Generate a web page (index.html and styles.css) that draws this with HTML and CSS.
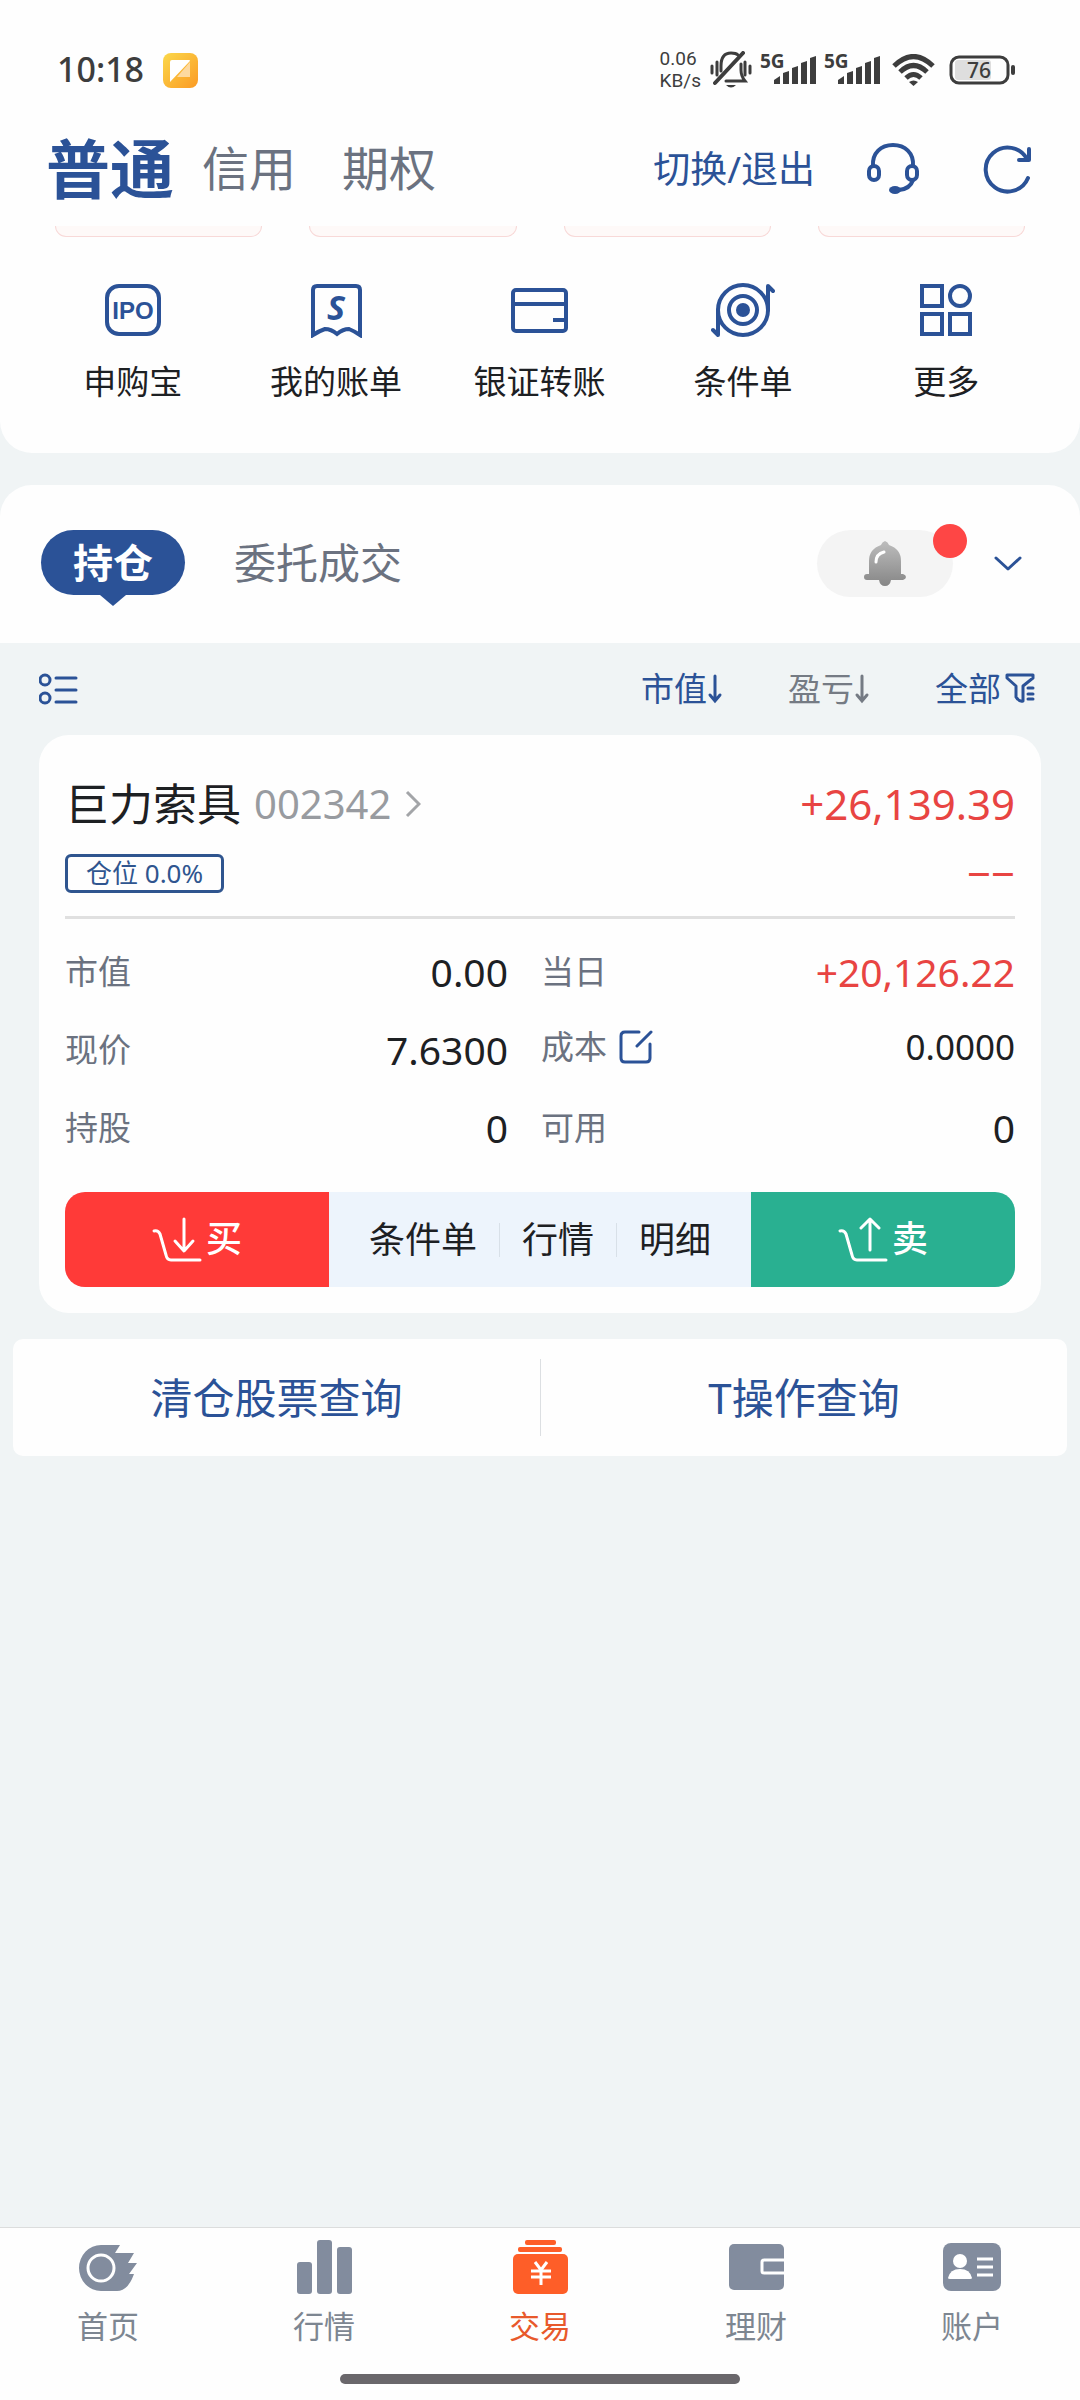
FILE: index.html
```html
<!DOCTYPE html>
<html lang="zh-CN">

<head>
  <meta charset="UTF-8">
  <meta name="viewport" content="width=device-width, initial-scale=1.0">
  <title>交易 - 持仓</title>
  <link rel="stylesheet" href="styles.css">
</head>

<body>
  <div class="top-panel">
    <div class="status-bar">
      <span class="time">10:18</span>
      <svg class="app-icon" width="35" height="35" viewBox="0 0 35 35">
        <defs>
          <linearGradient id="app-bg" x1="0" y1="0" x2="1" y2="1">
            <stop offset="0" stop-color="#fbd84a" />
            <stop offset="1" stop-color="#fb9a24" />
          </linearGradient>
        </defs>
        <rect width="35" height="35" rx="8" fill="url(#app-bg)" />
        <path d="M27 9V24H14Z" fill="#fdd9a0" />
        <path d="M9 7H26Q28 7 26 9L7 29V9Q7 7 9 7Z" fill="#fff" />
      </svg>
      <div class="status-icons">
        <span class="speed">0.06<br>KB/s</span>
        <svg class="mute" width="42" height="38" viewBox="0 0 42 38" fill="none" stroke="#3d3d3d" stroke-width="3" stroke-linecap="round">
          <path d="M2 15v7M7 11v13M35 11v13M40 15v7" />
          <path d="M11 20V15C11 7 14 2 21 2Q26 2 28 4M31 13V19Q31 25 35 30H16" />
          <path d="M33 2L5 32" stroke-width="4" />
          <path d="M16 34h10q-5 5-10 0z" fill="#3d3d3d" stroke="none" />
        </svg>
        <span class="signal">
          <span>5G</span>
          <svg width="42" height="28" viewBox="0 0 42 28" fill="#3d3d3d">
            <path d="M0 28V24L6 20V28ZM9 28V17L15 15V28ZM18 28V12L24 10V28ZM27 28V7L33 5V28ZM36 28V2L42 0V28Z" />
          </svg>
        </span>
        <span class="signal">
          <span>5G</span>
          <svg width="42" height="28" viewBox="0 0 42 28" fill="#3d3d3d">
            <path d="M0 28V24L6 20V28ZM9 28V17L15 15V28ZM18 28V12L24 10V28ZM27 28V7L33 5V28ZM36 28V2L42 0V28Z" />
          </svg>
        </span>
        <svg class="wifi" width="43" height="32" viewBox="0 0 43 32" fill="none" stroke="#3d3d3d" stroke-width="5">
          <path d="M2 12Q21.500-7 41 12M8 18Q21.500 5 35 18M14 24Q21.500 17 29 24" />
          <path d="M17 28q4.500-3 9 0l-4.500 4z" fill="#3d3d3d" stroke="none" />
        </svg>
        <svg class="battery" width="67" height="30" viewBox="0 0 67 30">
          <rect x="6" y="5" width="36" height="20" rx="3" fill="#dedede" />
          <rect x="2" y="2" width="57" height="26" rx="8" fill="none" stroke="#3d3d3d" stroke-width="3" />
          <rect x="62" y="10" width="4" height="10" rx="2" fill="#3d3d3d" />
          <text x="30" y="23" text-anchor="middle" font-size="21" font-weight="500" fill="#3d3d3d">76</text>
        </svg>
      </div>
    </div>

    <header>
      <nav class="account-tabs">
        <a class="active" href="#">普通</a>
        <a href="#">信用</a>
        <a href="#">期权</a>
      </nav>
      <div class="header-actions">
        <a href="#">切换/退出</a>
        <button type="button" aria-label="客服">
          <svg width="52" height="52" viewBox="0 0 52 52" fill="none" stroke="#2b5297" stroke-width="4">
            <path d="M6 23C5 10 14 2 26 2S47 10 46 23" />
            <rect x="2" y="23" width="10" height="14" rx="5" />
            <rect x="40" y="23" width="10" height="14" rx="5" />
            <path d="M46 37Q43 46 32 47" />
            <ellipse cx="28" cy="47" rx="6" ry="4" fill="#2b5297" stroke="none" />
          </svg>
        </button>
        <button type="button" aria-label="刷新">
          <svg width="50" height="50" viewBox="0 0 50 50" fill="none" stroke="#2b5297" stroke-width="4" stroke-linecap="round" stroke-linejoin="round">
            <path d="M45 34A22 22 0 1 1 44 15" />
            <path d="M46 5V16H36" />
          </svg>
        </button>
      </div>
    </header>

    <div class="asset-cards">
      <div></div>
      <div></div>
      <div></div>
      <div></div>
    </div>

    <nav class="shortcuts">
      <a href="#">
        <svg width="58" height="56" viewBox="0 0 58 56" fill="none" stroke="#2b5297" stroke-width="4">
          <rect x="3" y="4" width="52" height="48" rx="12" />
          <text class="ipo" x="29" y="37" text-anchor="middle">IPO</text>
        </svg>
        申购宝
      </a>
      <a href="#">
        <svg width="58" height="56" viewBox="0 0 58 56" fill="none" stroke="#2b5297" stroke-width="4">
          <path d="M6 53V8Q6 4 10 4H49Q53 4 53 8V53Q47 49 42 47Q36 47 30 52Q24 47 18 47Q12 49 6 53Z" />
          <text class="bill" x="29" y="38" text-anchor="middle">S</text>
        </svg>
        我的账单
      </a>
      <a href="#">
        <svg width="58" height="56" viewBox="0 0 58 56" fill="none" stroke="#2b5297" stroke-width="4">
          <rect x="3" y="8" width="53" height="41" rx="3" />
          <path d="M3 22H56M43 38H56" />
        </svg>
        银证转账
      </a>
      <a href="#">
        <svg width="64" height="56" viewBox="0 0 64 56" fill="none" stroke="#2b5297" stroke-width="4" stroke-linecap="round" stroke-linejoin="round">
          <path d="M57 28V4L62 9M7 28V53L2 48" />
          <ellipse cx="32" cy="28" rx="25" ry="25" />
          <circle cx="32" cy="28" r="14" />
          <circle cx="32" cy="28" r="7" fill="#2b5297" stroke="none" />
        </svg>
        条件单
      </a>
      <a href="#">
        <svg width="58" height="56" viewBox="0 0 58 56" fill="none" stroke="#2b5297" stroke-width="4">
          <rect x="5" y="4" width="20" height="20" />
          <ellipse cx="43" cy="14" rx="10" ry="10" />
          <rect x="5" y="32" width="20" height="20" />
          <rect x="33" y="32" width="20" height="20" />
        </svg>
        更多
      </a>
    </nav>
  </div>

  <main>
    <div class="position-header">
      <button type="button" class="tab active">持仓</button>
      <button type="button" class="tab">委托成交</button>
      <button type="button" class="alert" aria-label="提醒">
        <svg width="42" height="45" viewBox="0 0 42 45">
          <defs>
            <linearGradient id="bell" x1="0" y1="0" x2="0" y2="1">
              <stop offset="0" stop-color="#bdbdbd" />
              <stop offset="1" stop-color="#868686" />
            </linearGradient>
          </defs>
          <path d="M21 0Q24 1 25 4Q37 8 37 20V33H39Q42 34 42 36T39 39H27Q26 45 21 45T15 39H3Q0 39 0 36T3 33H5V20Q5 8 17 4Q18 1 21 0Z" fill="url(#bell)" />
          <path d="M12 21Q12 13 20 11" fill="none" stroke="#fff" stroke-width="3" stroke-linecap="round" />
        </svg>
        <span class="dot"></span>
      </button>
      <button type="button" class="expand" aria-label="展开">
        <svg width="28" height="16" viewBox="0 0 28 16" fill="none" stroke="#2b5297" stroke-width="3" stroke-linecap="round" stroke-linejoin="round">
          <path d="M2 2L14 13L26 2" />
        </svg>
      </button>
    </div>

    <div class="filters">
      <button type="button" class="list-mode" aria-label="列表模式">
        <svg width="40" height="32" viewBox="0 0 40 32" fill="none" stroke="#2b5297" stroke-width="3" stroke-linecap="round">
          <circle cx="6" cy="7" r="5" />
          <circle cx="6" cy="25" r="5" />
          <path d="M17 5H37M17 17H37M17 29H37" />
        </svg>
      </button>
      <button type="button">市值<svg width="16" height="32" viewBox="0 0 16 32" fill="none" stroke="currentColor" stroke-width="3" stroke-linecap="round"><path d="M8 3V27M3 22L8 28L13 22" /></svg></button>
      <button type="button" class="muted">盈亏<svg width="16" height="32" viewBox="0 0 16 32" fill="none" stroke="currentColor" stroke-width="3" stroke-linecap="round"><path d="M8 3V27M3 22L8 28L13 22" /></svg></button>
      <button type="button">全部<svg class="funnel" width="30" height="32" viewBox="0 0 30 32" fill="none" stroke="currentColor" stroke-width="3" stroke-linecap="round" stroke-linejoin="round"><path d="M2 2H28V5L18 13V28Q14 29 11 24V13L2 5ZM23 15H28M23 21H28M23 26H28" /></svg></button>
    </div>

    <section class="stock-card">
      <div class="stock-head">
        <a href="#">
          <span class="name">巨力索具</span>
          <span class="code">002342</span>
          <svg width="16" height="28" viewBox="0 0 16 28" fill="none" stroke="#a3a5a8" stroke-width="3"><path d="M2 2L14 14L2 26" /></svg>
        </a>
        <span class="profit">+26,139.39</span>
      </div>
      <div class="stock-sub">
        <span class="tag">仓位 0.0%</span>
        <span class="profit">−−</span>
      </div>

      <dl class="stock-data">
        <div><dt>市值</dt><dd>0.00</dd></div>
        <div><dt>当日</dt><dd class="up">+20,126.22</dd></div>
        <div><dt>现价</dt><dd>7.6300</dd></div>
        <div class="cost">
          <dt>成本
            <svg width="34" height="34" viewBox="0 0 34 34" fill="none" stroke="#2b5297" stroke-width="3" stroke-linecap="round"><path d="M20 2H6Q2 2 2 6V28Q2 32 6 32H27Q31 32 31 28V14M18 16L32 2" /></svg>
          </dt>
          <dd>0.0000</dd>
        </div>
        <div><dt>持股</dt><dd>0</dd></div>
        <div><dt>可用</dt><dd>0</dd></div>
      </dl>

      <div class="stock-actions">
        <button type="button" class="buy">
          <svg width="50" height="46" viewBox="0 0 50 46" fill="none" stroke="#fff" stroke-width="3" stroke-linecap="round" stroke-linejoin="round">
            <path d="M2 14Q6 13 8 17L14 38Q15 43 19 43H48M32 2V33M23 24L32 34L41 24" />
          </svg>
          买
        </button>
        <div class="more-actions">
          <button type="button">条件单</button>
          <button type="button">行情</button>
          <button type="button">明细</button>
        </div>
        <button type="button" class="sell">
          <svg width="50" height="46" viewBox="0 0 50 46" fill="none" stroke="#fff" stroke-width="3" stroke-linecap="round" stroke-linejoin="round">
            <path d="M2 14Q6 13 8 17L14 38Q15 43 19 43H48M32 33V2M23 11L32 2L41 11" />
          </svg>
          卖
        </button>
      </div>
    </section>

    <div class="query-links">
      <a href="#">清仓股票查询</a>
      <a href="#">T操作查询</a>
    </div>
  </main>

  <footer>
    <nav class="bottom-nav">
      <a href="#">
        <svg width="60" height="60" viewBox="0 0 60 60" fill="#828c9e">
          <path d="M23 8H42L37 16H56L50 26H59L51 37H56Q50 54 39 54H23A22 23 0 0 1 23 8Z" />
          <circle cx="23" cy="31" r="13" fill="none" stroke="#fff" stroke-width="3" />
        </svg>
        首页
      </a>
      <a href="#">
        <svg width="60" height="60" viewBox="0 0 60 60" fill="#828c9e">
          <rect x="3" y="25" width="15" height="32" rx="3" />
          <rect x="23" y="3" width="15" height="54" rx="3" />
          <rect x="43" y="10" width="15" height="47" rx="3" />
        </svg>
        行情
      </a>
      <a class="current" href="#">
        <svg width="60" height="60" viewBox="0 0 60 60" fill="#fe5e28">
          <rect x="15" y="3" width="31" height="5" rx="2" />
          <rect x="8" y="10" width="44" height="5" rx="2" />
          <rect x="3" y="17" width="55" height="40" rx="5" />
          <path d="M25 25L31 33L37 25M21 34H41M21 40H41M31 33V48" fill="none" stroke="#fff" stroke-width="3" />
        </svg>
        交易
      </a>
      <a href="#">
        <svg width="60" height="60" viewBox="0 0 60 60" fill="#828c9e">
          <rect x="3" y="7" width="55" height="46" rx="5" />
          <path d="M58 23H38Q36 23 36 25V34Q36 36 38 36H58" fill="none" stroke="#fff" stroke-width="3" />
        </svg>
        理财
      </a>
      <a href="#">
        <svg width="60" height="60" viewBox="0 0 60 60" fill="#828c9e">
          <rect x="1" y="6" width="58" height="48" rx="8" />
          <circle cx="18" cy="24" r="7" fill="#fff" />
          <path d="M6 41Q8 32 18 32T30 41Q30 42 28 42H8Q6 42 6 41Z" fill="#fff" />
          <path d="M35 22H51M35 30H51M35 38H51" stroke="#fff" stroke-width="3" />
        </svg>
        账户
      </a>
    </nav>
    <div class="home-bar"></div>
  </footer>
</body>

</html>
```

FILE: styles.css
```css
* {
  box-sizing: border-box;
}

body {
  margin: 0;
  min-height: 100vh;
  display: flex;
  flex-direction: column;
  background: #f0f4f5;
  color: #1d2023;
  font-family: "Noto Sans", "Noto Sans CJK SC", sans-serif;
  line-height: 1.4;
}

a {
  color: inherit;
  text-decoration: none;
}

button {
  display: flex;
  align-items: center;
  padding: 0;
  border: 0;
  background: none;
  color: inherit;
  font: inherit;
}

svg {
  display: block;
  flex-shrink: 0;
}

.top-panel {
  background: #fefefe;
  border-radius: 0 0 32px 32px;
  padding-bottom: 47px;
}

/* status bar */
.status-bar {
  display: flex;
  align-items: center;
  height: 110px;
  padding: 30px 64px 0 57px;
  color: #3d3d3d;
}

.time {
  font-size: 34px;
  font-weight: 500;
}

.app-icon {
  margin-left: 19px;
}

.status-icons {
  display: flex;
  align-items: center;
  margin-left: auto;
}

.speed {
  font-family: Roboto, sans-serif;
  font-size: 19px;
  line-height: 22px;
}

.mute {
  margin-left: 9px;
}

.signal {
  display: flex;
  position: relative;
  padding-left: 14px;
  margin-left: 8px;

  span {
    position: absolute;
    left: 0;
    top: -5px;
    font-size: 19px;
    font-weight: 700;
    line-height: 20px;
  }
}

.wifi {
  margin-left: 12px;
}

.battery {
  margin-left: 14px;
}

/* header */
header {
  display: flex;
  align-items: center;
  justify-content: space-between;
  height: 116px;
  padding: 2px 47px 0 46px;
}

.account-tabs {
  display: flex;
  align-items: center;
  color: #6b7280;
  font-size: 47px;

  a + a {
    margin-left: 46px;
  }

  .active {
    color: #2b5297;
    font-size: 64px;
    font-weight: 700;
  }

  .active + a {
    margin-left: 28px;
  }
}

.header-actions {
  display: flex;
  align-items: center;
  color: #2b5297;
  font-size: 37px;

  button {
    margin-left: 52px;
  }

  button + button {
    margin-left: 64px;
  }
}

.asset-cards {
  display: grid;
  grid-template-columns: repeat(4, 1fr);
  gap: 47px;
  padding: 0 55px;

  div {
    height: 11px;
    border: 1px solid #f8d9d8;
    border-top: 0;
    border-radius: 0 0 12px 12px;
    background: #fef9f8;
  }
}

.shortcuts {
  display: grid;
  grid-template-columns: repeat(5, 1fr);
  padding: 45px 32px 0 31px;

  a {
    display: flex;
    flex-direction: column;
    align-items: center;
    gap: 20px;
    font-size: 33px;
    line-height: 48px;
  }

  text {
    fill: #2b5297;
    stroke: none;
    font-weight: 700;
  }

  .ipo {
    font-family: "Liberation Sans", sans-serif;
    font-size: 24px;
  }

  .bill {
    font-size: 34px;
    font-style: italic;
  }
}

/* positions */
main {
  flex: 1;
  margin-top: 32px;
}

.position-header {
  display: flex;
  align-items: flex-start;
  padding: 45px 58px 46px 41px;
  border-radius: 32px 32px 0 0;
  background: #fefefe;
}

.tab {
  height: 67px;
  color: #6b7280;
  font-size: 42px;
}

.tab.active {
  position: relative;
  height: 65px;
  padding: 0 32px;
  margin-right: 49px;
  border-radius: 34px;
  background: #2b5297;
  color: white;
  font-size: 40px;
  font-weight: 700;
}

.tab.active::after {
  content: "";
  position: absolute;
  top: 100%;
  left: 50%;
  margin-left: -13px;
  border: 13px solid transparent;
  border-top: 11px solid #2b5297;
  border-bottom: 0;
}

.alert {
  position: relative;
  justify-content: center;
  width: 136px;
  height: 67px;
  margin-left: auto;
  border-radius: 34px;
  background: #f4f4f4;
}

.dot {
  position: absolute;
  top: -6px;
  right: -14px;
  width: 34px;
  height: 34px;
  border-radius: 50%;
  background: #fe4645;
}

.expand {
  height: 67px;
  margin-left: 41px;
}

.filters {
  display: flex;
  align-items: center;
  height: 92px;
  padding: 0 45px 0 39px;
  color: #2b5297;
  font-size: 33px;

  button + button {
    margin-left: 65px;
  }

  .list-mode {
    margin-right: auto;
  }

  .muted {
    color: #757b84;
  }

  .funnel {
    margin-left: 4px;
  }
}

.stock-card {
  margin: 0 39px;
  padding: 40px 26px 26px;
  border-radius: 30px;
  background: #fefefe;
}

.stock-head {
  display: flex;
  justify-content: space-between;
  line-height: 58px;

  a {
    display: flex;
    align-items: center;
  }

  .name {
    font-size: 44px;
  }

  .code {
    margin: 0 14px 0 13px;
    color: #989ba0;
    font-size: 40px;
  }
}

.profit {
  color: #e84442;
  font-size: 42px;
}

.stock-sub {
  display: flex;
  align-items: center;
  justify-content: space-between;
  height: 86px;
  padding-bottom: 2px;
  border-bottom: 3px solid #e0e0e0;
}

.tag {
  padding: 0 18px;
  border: 3px solid #2f558f;
  border-radius: 6px;
  color: #2f558f;
  font-size: 26px;
  line-height: 33px;
}

.stock-data {
  display: grid;
  grid-template-columns: 443px 1fr;
  gap: 30px 33px;
  margin: 0;
  padding: 29px 0 40px;

  div {
    display: flex;
    justify-content: space-between;
    align-items: flex-start;
    line-height: 48px;
  }

  dt {
    display: flex;
    align-items: center;
    gap: 12px;
    color: #6b7280;
    font-size: 33px;
  }

  dd {
    margin: 0;
    font-size: 39px;
  }

  .up {
    color: #e84442;
  }

  .cost {
    line-height: 42px;
  }

  .cost dd {
    font-size: 35px;
  }
}

.stock-actions {
  display: grid;
  grid-template-columns: 5fr 8fr 5fr;
  height: 95px;
  border-radius: 20px;
  overflow: hidden;
  background: #edf4fc;
  font-size: 36px;
}

.buy,
.sell {
  justify-content: center;
  gap: 4px;
  color: white;
  font-weight: 500;
}

.buy {
  background: #ff3a38;
}

.sell {
  background: #29b091;
}

.more-actions {
  display: flex;
  align-items: center;
  justify-content: center;

  button {
    line-height: 34px;
  }

  button + button {
    margin-left: 22px;
    padding-left: 22px;
    border-left: 1px solid #d8e0e8;
  }
}

.query-links {
  display: grid;
  grid-template-columns: 1fr 1fr;
  margin: 26px 13px 0;
  padding: 20px 0;
  border-radius: 10px;
  background: #fefefe;
  color: #2b5297;
  font-size: 42px;
  line-height: 77px;
  text-align: center;

  a + a {
    border-left: 1px solid #dcdfe2;
  }
}

/* bottom nav */
footer {
  border-top: 1px solid #dcdddd;
  background: #fefefe;
  padding: 9px 0 16px;
}

.bottom-nav {
  display: grid;
  grid-template-columns: repeat(5, 1fr);
  color: #7d8691;
  font-size: 31px;
  line-height: 38px;

  a {
    display: flex;
    flex-direction: column;
    align-items: center;
    gap: 10px;
  }

  .current {
    color: #e8592b;
  }
}

.home-bar {
  width: 37%;
  height: 10px;
  margin: 29px auto 0;
  border-radius: 5px;
  background: #6a676b;
}
```
